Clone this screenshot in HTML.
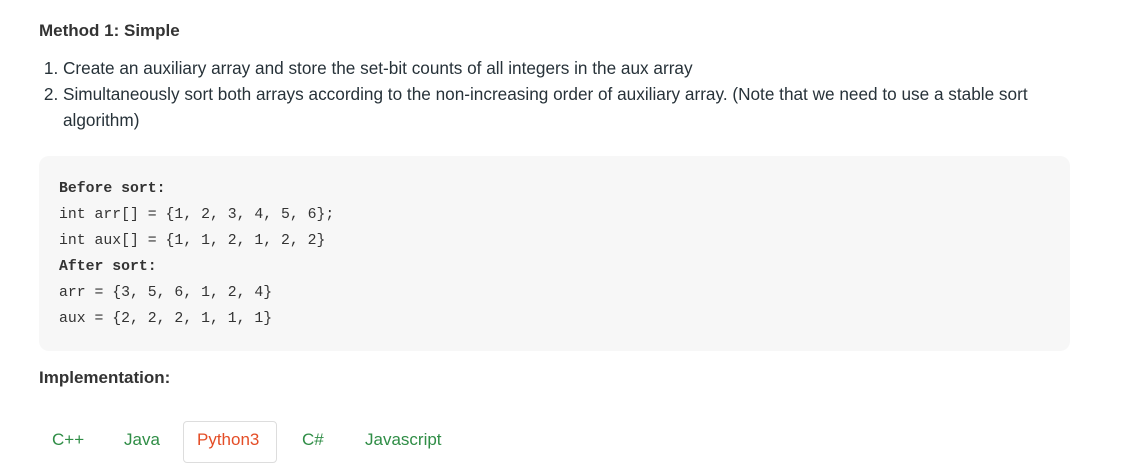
<!DOCTYPE html>
<html><head><style>
body{margin:0;background:#fff;width:1147px;height:445px;overflow:hidden;font-family:"Liberation Sans",sans-serif;color:#273239;}
.h{position:absolute;left:39px;font-weight:bold;font-size:17px;color:#333;}
ol{position:absolute;left:39px;top:55px;margin:0;padding-left:24px;width:990px;font-size:17.2px;line-height:26px;color:#273239;}
.code{position:absolute;left:39px;top:156px;width:1031px;height:195px;background:#f7f7f7;border-radius:10px;}
.code pre{margin:0;position:absolute;left:20px;top:20px;font-family:"Liberation Mono",monospace;font-size:14.8px;line-height:26px;color:#333;}
.tab{position:absolute;top:430px;font-size:17px;color:#2f8d46;}
.act{position:absolute;left:183px;top:421px;width:92px;height:40px;border:1px solid #ddd;border-radius:4px;background:#fff;}
</style></head><body>
<div class="h" style="top:21px">Method 1: Simple</div>
<ol>
<li>Create an auxiliary array and store the set-bit counts of all integers in the aux array</li>
<li>Simultaneously sort both arrays according to the non-increasing order of auxiliary array. (Note that we need to use a stable sort algorithm)</li>
</ol>
<div class="code"><pre><b>Before sort:</b>
int arr[] = {1, 2, 3, 4, 5, 6};
int aux[] = {1, 1, 2, 1, 2, 2}
<b>After sort:</b>
arr = {3, 5, 6, 1, 2, 4}
aux = {2, 2, 2, 1, 1, 1}</pre></div>
<div class="h" style="top:368px">Implementation:</div>
<div class="act"></div>
<div class="tab" style="left:52px">C++</div>
<div class="tab" style="left:124px">Java</div>
<div class="tab" style="left:197px;color:#e44d26">Python3</div>
<div class="tab" style="left:302px">C#</div>
<div class="tab" style="left:365px">Javascript</div>
</body></html>
